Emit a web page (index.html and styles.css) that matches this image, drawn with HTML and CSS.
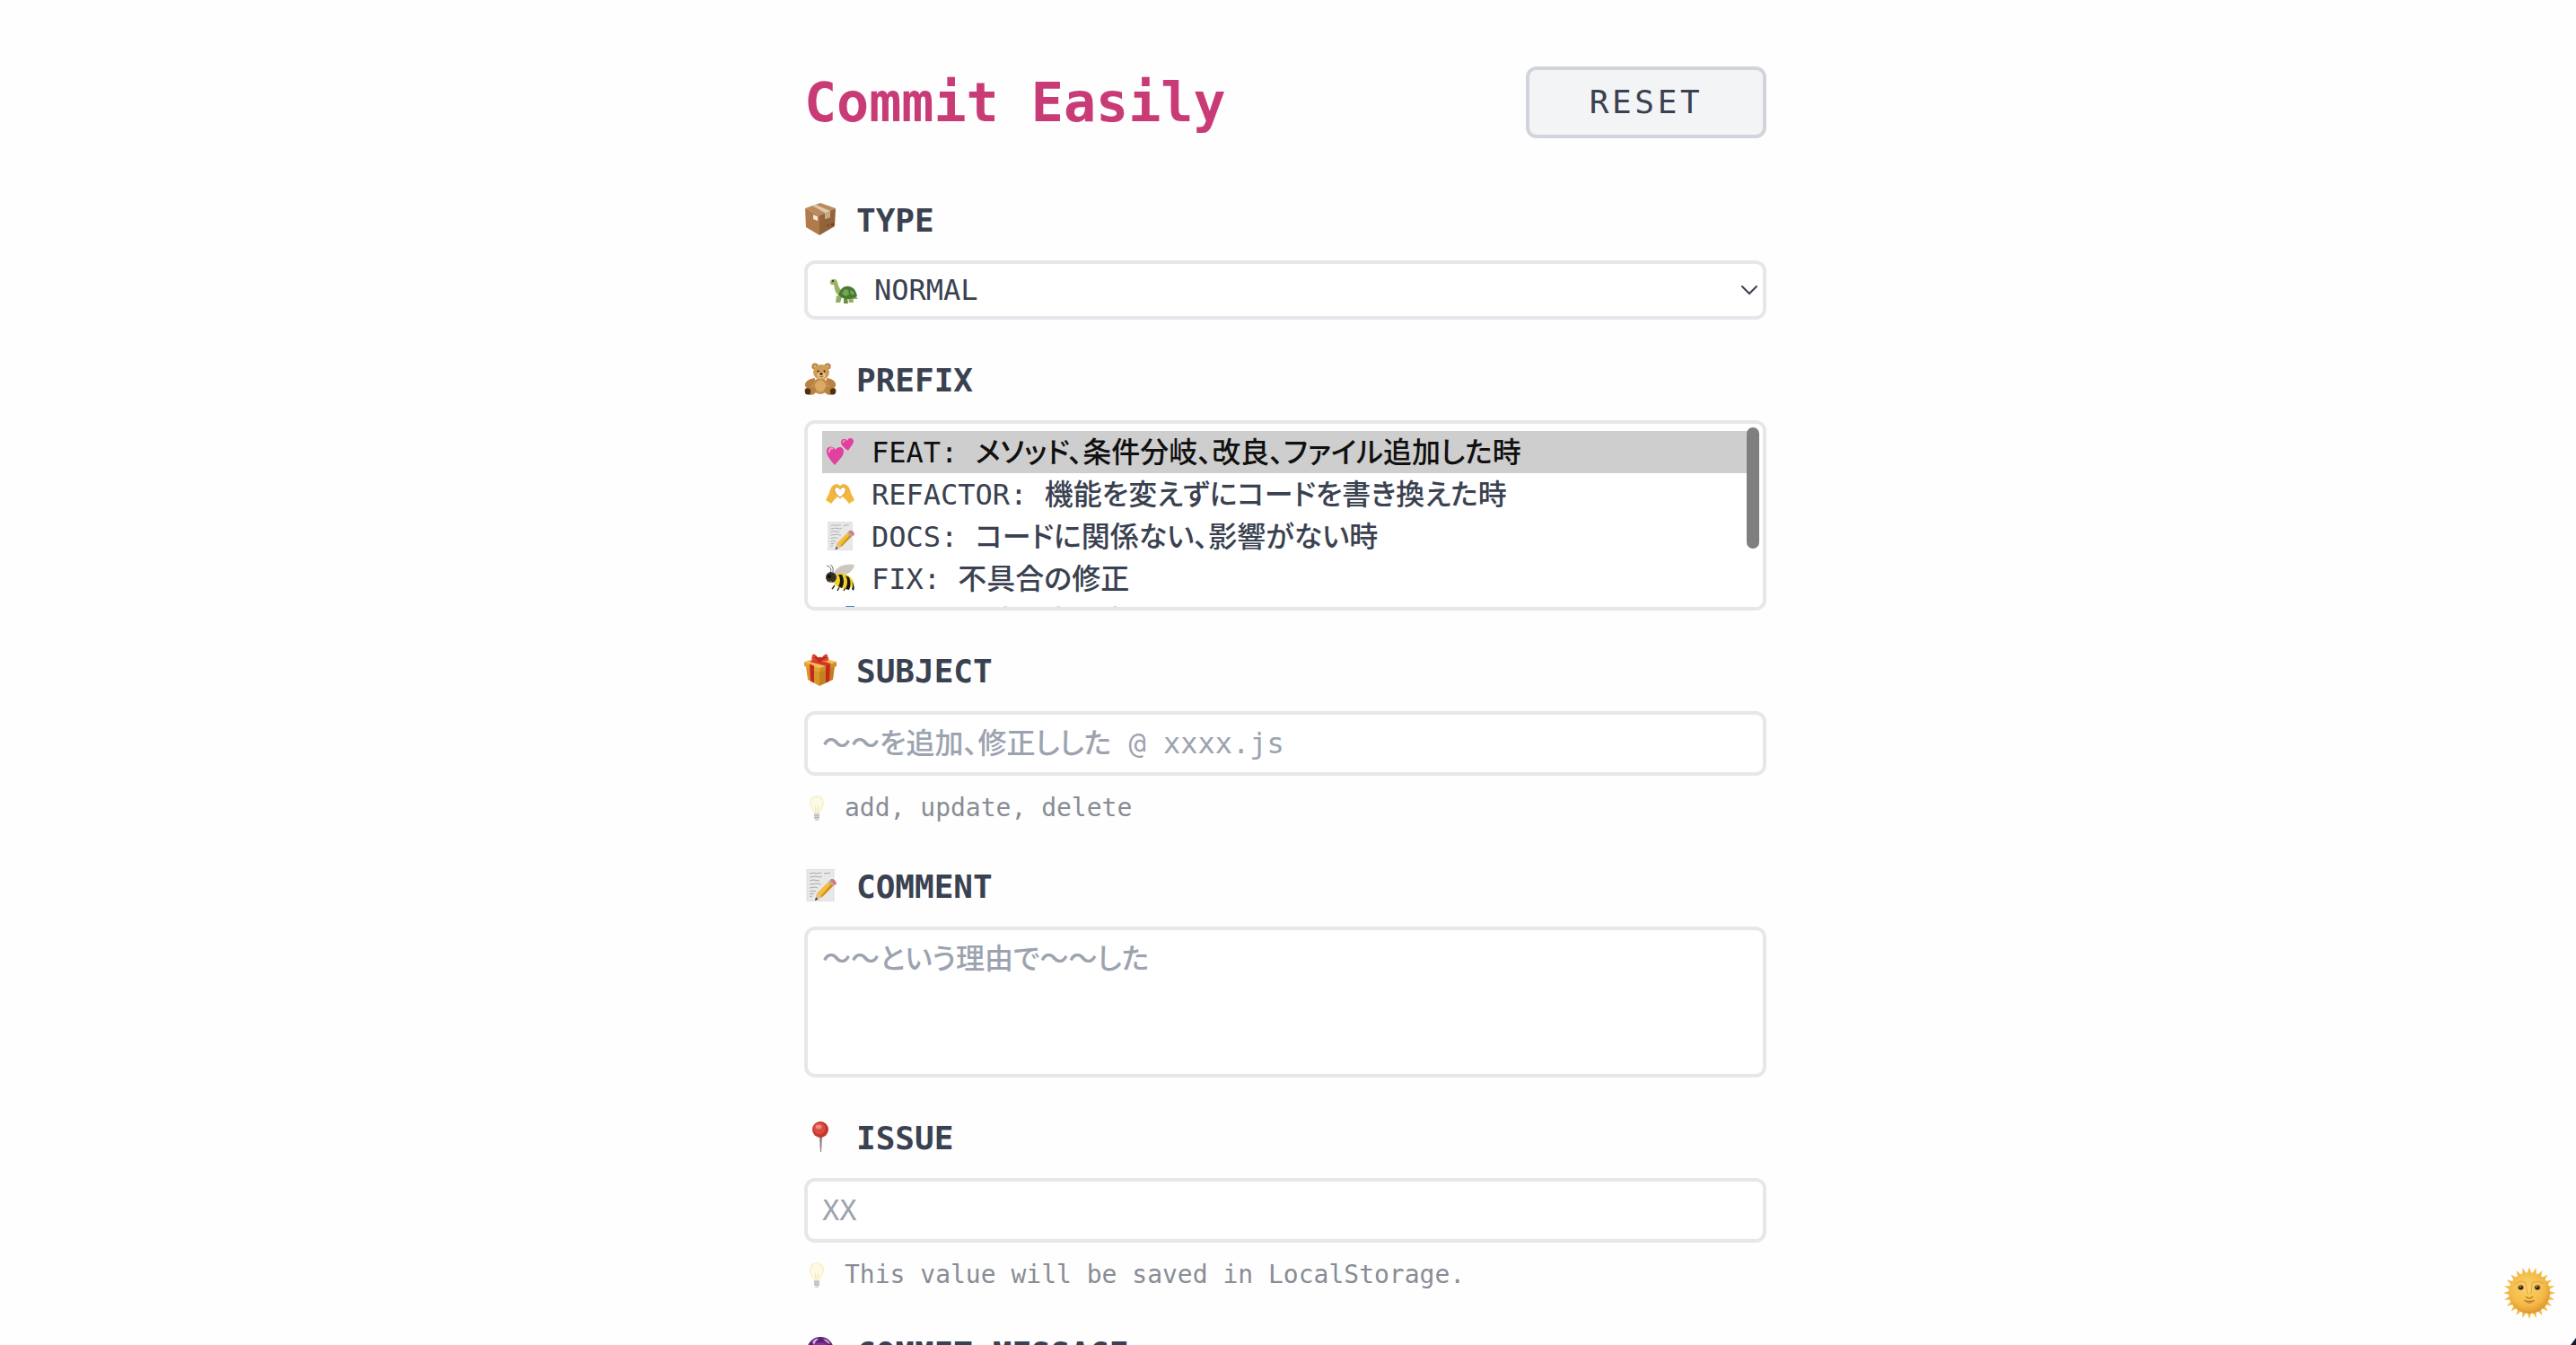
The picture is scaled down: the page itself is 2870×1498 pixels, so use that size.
FILE: index.html
```html
<!DOCTYPE html>
<html lang="ja">
<head>
<meta charset="utf-8">
<meta name="viewport" content="width=device-width, initial-scale=1">
<title>Commit Easily</title>
<link rel="stylesheet" href="styles.css">
</head>
<body>
<main class="page">
  <header class="header">
    <h1 class="title">Commit Easily</h1>
    <button class="reset" type="button">RESET</button>
  </header>

  <form class="form">
    <div class="field">
      <label class="label" for="type">
        <svg class="label-icon" viewBox="0 0 36 36" aria-hidden="true">
          <path d="M1 6 18 0 35 6 17 14Z" fill="#bb8a5c"/>
          <path d="M1 6 17 14V36L2 27Z" fill="#b07a4a"/>
          <path d="M35 6 17 14V36L34 26Z" fill="#93633a"/>
          <path d="M9 3 13 2 29 9V16L23 18V11Z" fill="#ddc9ae"/>
          <path d="M23 11 29 9V16L23 18Z" fill="#c3a985"/>
          <path d="M10 13 15 15V20L10 18Z" fill="#eee8e2"/>
          <path d="M25 25 28 23 27 27ZM30 23 33 22V25L30 26Z" fill="#6e4624"/>
        </svg>
        TYPE
      </label>
      <select class="control select" id="type">
        <option selected>NORMAL</option>
        <option>EMOJI</option>
      </select>
    </div>

    <div class="field">
      <label class="label" for="prefix">
        <svg class="label-icon" viewBox="0 0 36 36" aria-hidden="true">
          <circle cx="12" cy="4" r="3.6" fill="#b07c3c"/><circle cx="26" cy="4" r="3.6" fill="#b07c3c"/>
          <circle cx="12" cy="4" r="1.8" fill="#e0b06a"/><circle cx="26" cy="4" r="1.8" fill="#e0b06a"/>
          <path d="M12 17C4 18 0 22 1 26 3 29 8 26 12 24ZM25 17C33 18 36 22 35 26 33 29 28 26 24 24Z" fill="#b98243"/>
          <ellipse cx="18" cy="26" rx="9" ry="9" fill="#c28c4b"/>
          <ellipse cx="18" cy="26" rx="6" ry="6.500" fill="#d9a965"/>
          <ellipse cx="7" cy="31" rx="6.500" ry="5" fill="#b98243"/><ellipse cx="29" cy="31" rx="6.500" ry="5" fill="#b98243"/>
          <ellipse cx="4" cy="32" rx="3.200" ry="3.600" fill="#4a2d1b"/><ellipse cx="32" cy="32" rx="3.200" ry="3.600" fill="#4a2d1b"/>
          <ellipse cx="19" cy="10.500" rx="9" ry="8.500" fill="#d09b55"/>
          <ellipse cx="19" cy="14" rx="4.500" ry="3.600" fill="#ecca8d"/>
          <circle cx="15.500" cy="9.500" r="1" fill="#2b1a10"/><circle cx="22.500" cy="9.500" r="1" fill="#2b1a10"/>
          <ellipse cx="19" cy="12.500" rx="1.800" ry="1.200" fill="#2b1a10"/>
          <path d="M16.500 15Q19 17 21.500 15" fill="none" stroke="#6b4220" stroke-width=".8"/>
        </svg>
        PREFIX
      </label>
      <div class="list-box">
        <select class="control list" id="prefix" size="4">
          <option class="opt-feat" selected>FEAT: メソッド、条件分岐、改良、ファイル追加した時</option>
          <option class="opt-refactor">REFACTOR: 機能を変えずにコードを書き換えた時</option>
          <option class="opt-docs">DOCS: コードに関係ない、影響がない時</option>
          <option class="opt-fix">FIX: 不具合の修正</option>
          <option class="opt-env">ENV: 環境設定の変更</option>
          <option class="opt-test">TEST: テストの追加</option>
        </select>
        <span class="thumb"></span>
      </div>
    </div>

    <div class="field">
      <label class="label" for="subject">
        <svg class="label-icon" viewBox="0 0 36 36" aria-hidden="true">
          <path d="M2 14 17 19V36L4 29Z" fill="#d9962b"/>
          <path d="M34 14 17 19V36L32 29Z" fill="#c47f1e"/>
          <path d="M0 9 17 4 36 9 17 16Z" fill="#f0c04c"/>
          <path d="M0 9 17 16V21L0 14Z" fill="#e3a336"/>
          <path d="M36 9 17 16V21L36 14Z" fill="#cf8e28"/>
          <path d="M6 11.500 11 13.500V32.500L7 30.500ZM29 11.500 24 13.500V32.500L28 30.500Z" fill="#c4281f"/>
          <path d="M6 9 25 14 30 11 12 6Z" fill="#d9372b"/>
          <path d="M17 7C13-1 8 0 9 3 6 8 12 10 17 7ZM18 7C22-1 27 0 26 3 30 8 24 10 18 7Z" fill="#df4234"/>
          <path d="M12 4 15 6M24 4 20 6" stroke="#8e1712" stroke-width="1.200"/>
          <circle cx="17.500" cy="6.500" r="2.800" fill="#c4281f"/>
        </svg>
        SUBJECT
      </label>
      <input class="control input" id="subject" type="text" placeholder="〜〜を追加、修正しした @ xxxx.js">
      <p class="hint">
        <svg class="hint-icon" viewBox="0 0 28 28" aria-hidden="true"><use href="#bulb"/></svg>
        add, update, delete
      </p>
    </div>

    <div class="field">
      <label class="label" for="comment">
        <svg class="label-icon" viewBox="0 0 36 36" aria-hidden="true">
          <path d="M3 0H33V36H3Z" fill="#e8e8e8" stroke="#d2d2d2" stroke-width=".6"/>
          <path d="M6 5 11 4 13 5 19 4M22 5 29 4M6 9 12 8 17 9 20 8M6 13 10 12 17 13M6 17 14 16 19 17M6 21 12 20 15 21M6 25 10 24 13 25M6 28 11 27M6 31 9 30" fill="none" stroke="#999" stroke-width=".8"/>
          <path d="M12 35 14 27 29 12 34 17 20 31Z" fill="#f3bf3b"/>
          <path d="M17 32 31.500 14.500 34 17 20 31Z" fill="#cf8f20"/>
          <path d="M12 35 14 27 20 31Z" fill="#e2c08c"/><path d="M12 35 13 31.500 15.500 33.500Z" fill="#333"/>
          <path d="M27 14 30 11 35 16 32 19Z" fill="#a9aeb4"/>
          <path d="M29 12C31 9 37 13 35.500 17L34 18Z" fill="#e2747c"/>
        </svg>
        COMMENT
      </label>
      <textarea class="control textarea" id="comment" placeholder="〜〜という理由で〜〜した"></textarea>
    </div>

    <div class="field">
      <label class="label" for="issue">
        <svg class="label-icon" viewBox="0 0 36 36" aria-hidden="true">
          <path d="M17 18H20L19 35H18Z" fill="#8d817b"/>
          <circle cx="18" cy="10" r="9" fill="#c5352b"/>
          <circle cx="17" cy="9" r="6.500" fill="#d94d40"/>
          <ellipse cx="16" cy="7" rx="3.500" ry="2.500" fill="#ef8b7d"/>
        </svg>
        ISSUE
      </label>
      <input class="control input" id="issue" type="text" placeholder="XX">
      <p class="hint">
        <svg class="hint-icon" viewBox="0 0 28 28" aria-hidden="true">
          <g id="bulb">
            <path d="M14 0C8.500 0 6 4 6 9 6 13 9.500 16 11 20H17C18.500 16 22 13 22 9 22 4 19.500 0 14 0Z" fill="#f8e9a6"/>
            <path d="M14 1.500C10 1.500 7.500 5 7.500 9 7.500 12 10 15 12 19H16C18 15 20.500 12 20.500 9 20.500 5 18 1.500 14 1.500Z" fill="#fdf7d4"/>
            <path d="M12.500 12 13 19M15.500 12 15 19" stroke="#e2c877" stroke-width=".8"/>
            <path d="M11 20H17V25L15.500 28H12.500L11 25Z" fill="#b4b4b1"/>
            <path d="M11 22H17M11 24.500H17" stroke="#858585" stroke-width=".9"/>
          </g>
        </svg>
        This value will be saved in LocalStorage.
      </p>
    </div>

    <div class="field">
      <label class="label" for="message">
        <svg class="label-icon" viewBox="0 0 36 36" aria-hidden="true">
          <path d="M7 27H29L32 36H4Z" fill="#b98a3a"/>
          <circle cx="18" cy="16" r="15" fill="#5c2173"/>
          <circle cx="18" cy="18" r="11" fill="#7d3796"/>
          <path d="M9 7Q12 2 16 3 13 5 11 10ZM21 3Q27 4 29 9 25 8 21 3Z" fill="#d7a6e4"/>
        </svg>
        COMMIT MESSAGE
      </label>
      <textarea class="control textarea" id="message"></textarea>
    </div>
  </form>
</main>

<button class="theme" type="button" aria-label="Theme">
  <svg class="theme-icon" viewBox="0 0 60 60" aria-hidden="true">
    <defs>
      <radialGradient id="face" cx=".45" cy=".38" r=".62">
        <stop offset="0" stop-color="#fbd36c"/><stop offset=".7" stop-color="#f3b947"/><stop offset="1" stop-color="#dd962e"/>
      </radialGradient>
      <g id="rays">
        <path d="M27.500 9 30 1 32.500 9ZM27.500 51 30 59 32.500 51ZM9 27.500 1 30 9 32.500ZM51 27.500 59 30 51 32.500Z"/>
      </g>
    </defs>
    <g fill="#f3b93f">
      <use href="#rays"/>
      <use href="#rays" transform="rotate(15 30 30)"/>
      <use href="#rays" transform="rotate(30 30 30)"/>
      <use href="#rays" transform="rotate(45 30 30)"/>
      <use href="#rays" transform="rotate(60 30 30)"/>
      <use href="#rays" transform="rotate(75 30 30)"/>
    </g>
    <circle cx="30" cy="30" r="23" fill="url(#face)"/>
    <path d="M14 20Q20 15 26 19L28 31M46 20Q40 15 33 19L32 31" fill="none" stroke="#dfa443" stroke-width="1"/>
    <ellipse cx="20.500" cy="24" rx="3.600" ry="2.800" fill="#c48a3a"/><ellipse cx="39" cy="24" rx="3.600" ry="2.800" fill="#c48a3a"/>
    <circle cx="20.500" cy="24" r="2.500" fill="#2b2018"/><circle cx="39" cy="24" r="2.500" fill="#2b2018"/>
    <circle cx="20" cy="23" r=".8" fill="#fff"/><circle cx="38.500" cy="23" r=".8" fill="#fff"/>
    <path d="M26 34Q30 38 34 34" fill="none" stroke="#c67f25" stroke-width="1.500"/>
    <path d="M24 38Q27 39.500 30 38.500 33 39.500 36 38 33 42 30 42 27 42 24 38Z" fill="#d9953a"/>
    <path d="M24 38.500Q30 41 36 38.500" fill="none" stroke="#a8651c" stroke-width=".8"/>
  </svg>
</button>
<div class="corner"></div>
</body>
</html>
```
FILE: styles.css
```css
* {
  box-sizing: border-box;
}

body {
  margin: 0;
  padding-right: 6px;
  background: #fefefe;
  color: #3a4150;
  font-family: "DejaVu Sans Mono", "Noto Sans CJK JP", monospace;
  font-size: 32px;
  font-weight: 500;
  font-feature-settings: "palt";
}

.page {
  width: 100%;
  max-width: 1072px;
  margin: 0 auto;
  padding: 74px 0 64px;
}

.header {
  display: flex;
  align-items: center;
  justify-content: space-between;
  margin-bottom: 64px;
}

.title {
  margin: 0;
  color: #c93b76;
  font-size: 60px;
  line-height: 72px;
}

.reset {
  width: 268px;
  height: 80px;
  padding: 0 0 2px;
  border: 4px solid #d1d5db;
  border-radius: 12px;
  background: #f3f4f6;
  color: inherit;
  font-family: inherit;
  font-size: 36px;
  letter-spacing: 0.1em;
}

.form {
  display: flex;
  flex-direction: column;
  gap: 40px;
}

.field {
  display: flex;
  flex-direction: column;
}

.label {
  display: flex;
  align-items: center;
  gap: 22px;
  margin-bottom: 16px;
  font-size: 36px;
  font-weight: 700;
  line-height: 56px;
}

.label-icon {
  flex: none;
  width: 36px;
  height: 36px;
  margin-bottom: 4px;
}

.control {
  display: block;
  width: 100%;
  margin: 0;
  border: 4px solid #e5e7eb;
  border-radius: 12px;
  background-color: #fff;
  color: inherit;
  font: inherit;
  font-feature-settings: inherit;
  outline: none;
}

.control::placeholder {
  color: #9ca3af;
  opacity: 1;
}

.select {
  height: 66px;
  padding: 0 48px 0 74px;
  appearance: none;
  background-repeat: no-repeat;
  background-position: left 23px center, right 5px center;
  background-image:
    url("data:image/svg+xml,%3Csvg xmlns='http://www.w3.org/2000/svg' width='34' height='32' viewBox='0 0 34 32'%3E%3Cpath d='M9 22 8 30H13L15 24ZM22 24 23 30H28L27 22Z' fill='%2393ae5c'/%3E%3Cpath d='M17 24 17 31H22L21 24Z' fill='%236f8d43'/%3E%3Cpath d='M12 22C7 20 7 14 6 10 3 11 1 9 2 6 4 3 9 3 10 7 11 12 13 16 17 18Z' fill='%2398b463'/%3E%3Cpath d='M29 22 33 26 27 26Z' fill='%2393ae5c'/%3E%3Cpath d='M11 22C13 14 18 11 23 12 29 13 31 18 32 23 26 27 17 27 11 22Z' fill='%23477a36'/%3E%3Cpath d='M15 20 18 15 22 16 23 21 19 23ZM24 16 28 18 29 21 25 21Z' fill='%2374a552'/%3E%3Ccircle cx='5' cy='6' r='1' fill='%23222'/%3E%3C/svg%3E"),
    url("data:image/svg+xml,%3Csvg xmlns='http://www.w3.org/2000/svg' width='20' height='12' viewBox='0 0 20 12'%3E%3Cpath d='M2 2 10 10 18 2' fill='none' stroke='%233a4150' stroke-width='2' stroke-linecap='round'/%3E%3C/svg%3E");
}

.list-box {
  position: relative;
}

.list {
  height: 212px;
  padding: 8px 16px;
  overflow-x: hidden;
  overflow-y: auto;
  scrollbar-width: none;
}

/* overlay scroll indicator */
.thumb {
  position: absolute;
  top: 8px;
  right: 8px;
  width: 14px;
  height: 135px;
  border-radius: 7px;
  background: #7f7f7f;
  pointer-events: none;
}

.list option {
  display: flex;
  align-items: flex-end;
  height: 47px;
  padding: 0 0 3px 55px;
  font-weight: 500;
  background-repeat: no-repeat;
  background-position: left 4px top 7px;
}

.opt-feat {
  background-image: url("data:image/svg+xml,%3Csvg xmlns='http://www.w3.org/2000/svg' width='32' height='32' viewBox='0 0 32 32'%3E%3Cpath d='M10 31C4 24 0 19 1 14 3 9 9 10 11 14 14 9 20 11 20 16 20 21 14 26 10 31Z' fill='%23e2409f'/%3E%3Cpath d='M4 17C3 14 6 11 8 13' fill='none' stroke='%23fa9bd0' stroke-width='2'/%3E%3Cpath d='M25 15C19 11 17 8 17 5 18 1 22 1 24 4 25 0 30 0 31 4 31 8 27 11 25 15Z' fill='%23e2409f'/%3E%3Cpath d='M19 6 21 3' stroke='%23fa9bd0' stroke-width='1.500'/%3E%3C/svg%3E");
}

.opt-refactor {
  background-image: url("data:image/svg+xml,%3Csvg xmlns='http://www.w3.org/2000/svg' width='32' height='32' viewBox='0 0 32 32'%3E%3Cpath d='M0 23 4 15C5 9 8 5 13 5L16 7 19 5C24 5 27 9 28 15L32 23 26 27 21 21 18 19 16 22 14 19 11 21 6 27Z' fill='%23f3b63c'/%3E%3Cpath d='M16 20C12 17 9 14 10 10 12 7 15 9 16 11 17 9 20 7 22 10 23 14 20 17 16 20Z' fill='%23fefefe' stroke='%23c98522' stroke-width='.8'/%3E%3C/svg%3E");
}

.opt-docs {
  background-image: url("data:image/svg+xml,%3Csvg xmlns='http://www.w3.org/2000/svg' width='32' height='32' viewBox='0 0 36 36'%3E%3Cpath d='M3 0H33V36H3Z' fill='%23e8e8e8' stroke='%23d2d2d2' stroke-width='.6'/%3E%3Cpath d='M6 5 11 4 13 5 19 4M22 5 29 4M6 9 12 8 17 9 20 8M6 13 10 12 17 13M6 17 14 16 19 17M6 21 12 20 15 21M6 25 10 24 13 25M6 28 11 27M6 31 9 30' fill='none' stroke='%23999' stroke-width='.8'/%3E%3Cpath d='M12 35 14 27 29 12 34 17 20 31Z' fill='%23f3bf3b'/%3E%3Cpath d='M17 32 31.500 14.500 34 17 20 31Z' fill='%23cf8f20'/%3E%3Cpath d='M12 35 14 27 20 31Z' fill='%23e2c08c'/%3E%3Cpath d='M12 35 13 31.500 15.500 33.500Z' fill='%23333'/%3E%3Cpath d='M27 14 30 11 35 16 32 19Z' fill='%23a9aeb4'/%3E%3Cpath d='M29 12C31 9 37 13 35.500 17L34 18Z' fill='%23e2747c'/%3E%3C/svg%3E");
}

.opt-fix {
  background-image: url("data:image/svg+xml,%3Csvg xmlns='http://www.w3.org/2000/svg' width='32' height='32' viewBox='0 0 32 32'%3E%3Cpath d='M9 10C12 3 22 -1 32 1 31 8 24 13 14 13Z' fill='%23cdc7bd'/%3E%3Cpath d='M5 10Q8 4 1 2M8 9Q9 3 5 1' fill='none' stroke='%23776f66'/%3E%3Cpath d='M10 24 7 28M15 26 13 30M22 26 20 30' stroke='%23332' stroke-width='1.500'/%3E%3Cellipse cx='19' cy='19' rx='12' ry='8' transform='rotate(18 19 19)' fill='%23efd02c'/%3E%3Cpath d='M14 12Q18 18 14 25L18 27Q22 20 18 12ZM22 13Q26 20 22 28L26 29Q29 22 26 15ZM29 19Q31 23 29 28L31 30Q33 24 29 19Z' fill='%2318160f'/%3E%3Ccircle cx='6' cy='15' r='6' fill='%23353027'/%3E%3Ccircle cx='4' cy='14' r='2' fill='%230c0c0c'/%3E%3Cpath d='M3 20 7 20' stroke='%23d8b430'/%3E%3C/svg%3E");
}

.opt-env,
.opt-test {
  background-image: url("data:image/svg+xml,%3Csvg xmlns='http://www.w3.org/2000/svg' width='32' height='32' viewBox='0 0 32 32'%3E%3Cpath d='M20 2Q26 -3 32 0 31 12 24 20L12 30 4 22Z' fill='%234f86cf'/%3E%3Cpath d='M2 30 5 22 12 29Z' fill='%232f5f9f'/%3E%3C/svg%3E");
}

.input {
  height: 72px;
  padding: 0 16px;
}

.textarea {
  height: 168px;
  padding: 8px 16px;
  line-height: 48px;
  resize: none;
}

.hint {
  display: flex;
  align-items: center;
  gap: 17px;
  margin: 16px 0 0;
  font-size: 28px;
  line-height: 40px;
  opacity: 0.6;
}

.hint-icon {
  flex: none;
  width: 28px;
  height: 28px;
}

.theme {
  position: fixed;
  right: 22px;
  bottom: 28px;
  padding: 0;
  border: 0;
  background: none;
}

.theme-icon {
  display: block;
  width: 60px;
  height: 60px;
}

.corner {
  position: fixed;
  right: 0;
  bottom: 0;
  width: 6px;
  height: 8px;
  background: #0d1a33;
  clip-path: polygon(100% 0, 100% 100%, 0 100%);
}
```
